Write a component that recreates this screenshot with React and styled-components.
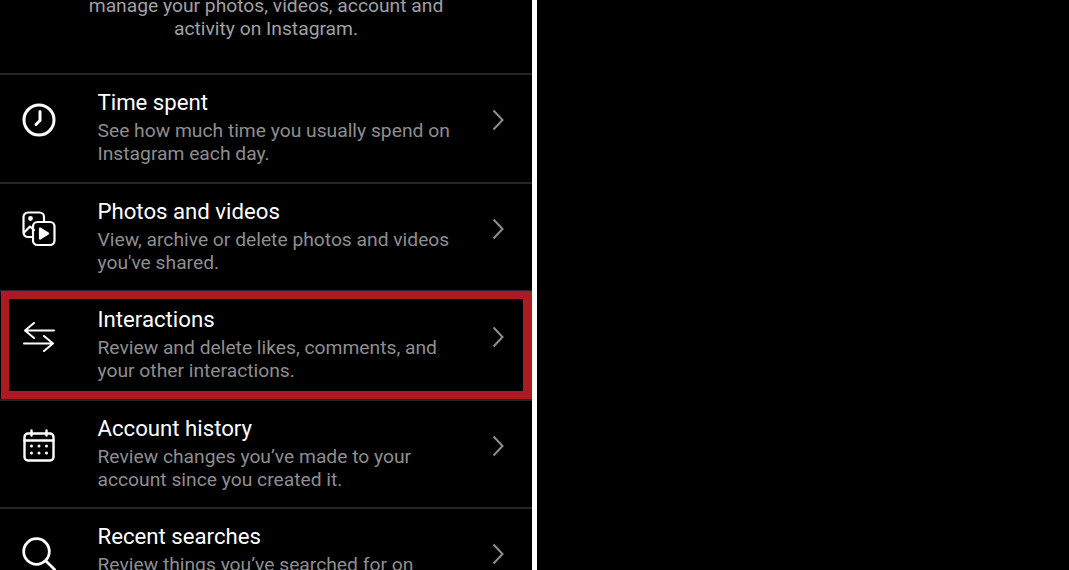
import React from "react";
import styled, { createGlobalStyle } from "styled-components";

const Global = createGlobalStyle`
  html, body { margin: 0; padding: 0; background: #000; }
  body { width: 1069px; height: 570px; overflow: hidden; font-family: Roboto, "Liberation Sans", sans-serif; }
`;
const Page = styled.div`
  display: flex;
  width: 1069px;
  height: 570px;
  overflow: hidden;
  background: #000;
`;
const Phone = styled.div`
  width: 532px;
  flex: none;
  height: 570px;
  overflow: hidden;
  background: #000;
`;
const Gutter = styled.div`
  width: 5px;
  flex: none;
  background: #fff;
`;
const Empty = styled.div`
  flex: 1;
  background: #000;
`;
const Intro = styled.p`
  box-sizing: border-box;
  margin: -6px 0 0;
  height: 81px;
  padding: 0 80px;
  text-align: center;
  color: #a0a0a0;
  font-size: 19.25px;
  line-height: 23px;
  border-bottom: 2px solid #262626;
`;
const Row = styled.div`
  box-sizing: border-box;
  height: 108.5px;
  display: flex;
  align-items: flex-start;
  position: relative;
  border-bottom: 2px solid #262626;
  padding-top: 13px;
`;
const Highlight = styled.div`
  position: absolute;
  left: 1px;
  top: -1px;
  width: 531px;
  height: 108px;
  box-sizing: border-box;
  border: 8px solid #ac1a22;
  border-right-width: 9px;
  pointer-events: none;
`;
const IconSlot = styled.div`
  width: 97.5px;
  height: 64px;
  flex: none;
  display: flex;
  align-items: center;
  justify-content: center;
  padding-right: 20px;
  box-sizing: border-box;
  color: #fff;
  svg { display: block; }
`;
const Body = styled.div`
  flex: 1;
  min-width: 0;
`;
const Title = styled.div`
  color: #fff;
  font-size: 22.2px;
  line-height: 28px;
  margin-bottom: 3px;
`;
const Sub = styled.div`
  color: #8e8e8e;
  font-size: 19.25px;
  line-height: 23px;
  white-space: pre-line;
`;
const Chevron = styled.svg`
  flex: none;
  margin: 21px 28.500px 0 0;
  display: block;
`;

const S = { fill: "none", stroke: "currentColor", strokeWidth: 2.6, strokeLinecap: "round", strokeLinejoin: "round" };

const Clock = () => (
  <svg width="34" height="34" viewBox="0 0 34 34" {...S} strokeWidth="3">
    <circle cx="17" cy="17" r="15" />
    <path d="M18 8.500V17.500L14 21.500" />
  </svg>
);
const Media = () => (
  <svg width="34" height="36" viewBox="0 0 34 36" {...S} strokeWidth="2.2">
    <path d="M10.500 26H6a4.500 4.500 0 0 1-4.500-4.500V6A4.500 4.500 0 0 1 6 1.500H17.500A4.500 4.500 0 0 1 22 6V11" />
    <path d="M2 21.500L8 15.500L12 19" />
    <circle cx="8.500" cy="7.500" r="1.300" fill="currentColor" />
    <rect x="11" y="11" width="21.500" height="23" rx="4.500" />
    <path d="M18 17.500L26 22.500L18 27.500Z" fill="currentColor" />
  </svg>
);
const Swap = () => (
  <svg width="32" height="30" viewBox="0 0 32 30" {...S} strokeWidth="2">
    <path d="M31 8.500H2M11 1L2 8.500L11 16" />
    <path d="M1 21.500H30M21 14L30 21.500L21 29" />
  </svg>
);
const Calendar = () => (
  <svg width="32" height="33" viewBox="0 0 32 33" {...S} strokeWidth="2.400">
    <rect x="1.500" y="4.500" width="29" height="27" rx="3.500" />
    <path d="M1.500 11.500H30.500M8.500 1.500V6.500M23.500 1.500V6.500" />
    <g fill="currentColor" stroke="none">
      <circle cx="8.500" cy="17" r="1.500" /><circle cx="16" cy="17" r="1.500" /><circle cx="23.500" cy="17" r="1.500" />
      <circle cx="8.500" cy="24" r="1.500" /><circle cx="16" cy="24" r="1.500" /><circle cx="23.500" cy="24" r="1.500" />
    </g>
  </svg>
);
const Search = () => (
  <svg width="34" height="34" viewBox="0 0 34 34" {...S} strokeWidth="2.800">
    <circle cx="14.500" cy="14.500" r="12.800" />
    <path d="M24 24L33 33" />
  </svg>
);

const rows = [
  { icon: <Clock />, title: "Time spent", sub: "See how much time you usually spend on\nInstagram each day." },
  { icon: <Media />, title: "Photos and videos", sub: "View, archive or delete photos and videos\nyou've shared." },
  { icon: <Swap />, title: "Interactions", sub: "Review and delete likes, comments, and\nyour other interactions.", marked: true },
  { icon: <Calendar />, title: "Account history", sub: "Review changes you’ve made to your\naccount since you created it." },
  { icon: <Search />, title: "Recent searches", sub: "Review things you’ve searched for on\nInstagram and clear them from your history." },
];

export default function App() {
  return (
    <Page>
      <Global />
      <Phone>
        <Intro>manage your photos, videos, account and activity on Instagram.</Intro>
        {rows.map((r) => (
          <Row key={r.title}>
            <IconSlot>{r.icon}</IconSlot>
            <Body>
              <Title>{r.title}</Title>
              <Sub>{r.sub}</Sub>
            </Body>
            <Chevron width="12" height="22" viewBox="0 0 12 22" fill="none" stroke="#8e8e8e" strokeWidth="2">
              <path d="M1.500 1.500L10.500 11L1.500 20.500" />
            </Chevron>
            {r.marked && <Highlight />}
          </Row>
        ))}
      </Phone>
      <Gutter />
      <Empty />
    </Page>
  );
}
